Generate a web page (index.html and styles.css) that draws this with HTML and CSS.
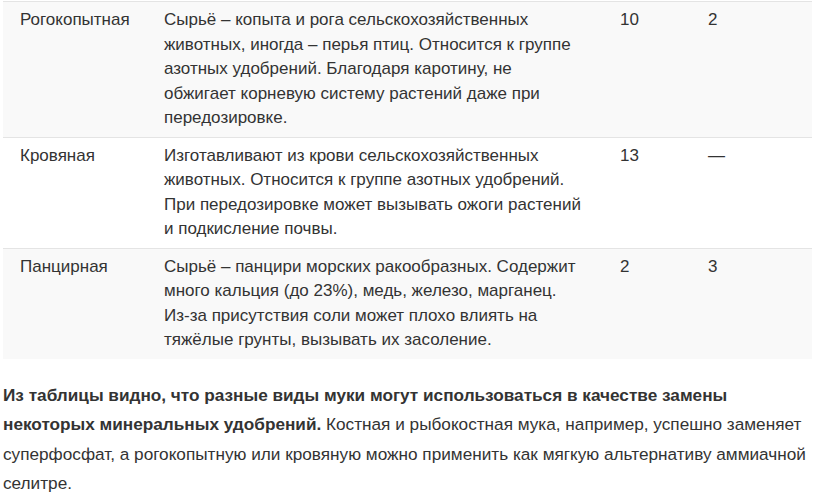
FILE: index.html
```html
<!DOCTYPE html>
<html lang="ru">
<head>
    <meta charset="UTF-8">
    <meta name="viewport" content="width=device-width, initial-scale=1.0">
    <title>Виды муки</title>
    <link rel="stylesheet" href="styles.css">
</head>
<body>
    <div class="article">
        <table class="flour-table">
            <tr class="striped">
                <td class="col-name">Рогокопытная</td>
                <td class="col-desc">Сырьё – копыта и рога сельскохозяйственных животных, иногда – перья птиц. Относится к группе азотных удобрений. Благодаря каротину, не обжигает корневую систему растений даже при передозировке.</td>
                <td class="col-num">10</td>
                <td class="col-num2">2</td>
            </tr>
            <tr>
                <td class="col-name">Кровяная</td>
                <td class="col-desc">Изготавливают из крови сельскохозяйственных животных. Относится к группе азотных удобрений. При передозировке может вызывать ожоги растений и подкисление почвы.</td>
                <td class="col-num">13</td>
                <td class="col-num2">—</td>
            </tr>
            <tr class="striped">
                <td class="col-name">Панцирная</td>
                <td class="col-desc">Сырьё – панцири морских ракообразных. Содержит много кальция (до 23%), медь, железо, марганец. <span class="nowrap">Из-за</span> присутствия соли может плохо влиять на тяжёлые грунты, вызывать их засоление.</td>
                <td class="col-num">2</td>
                <td class="col-num2">3</td>
            </tr>
        </table>

        <p class="summary"><strong>Из таблицы видно, что разные виды муки могут использоваться в качестве замены некоторых минеральных удобрений.</strong> Костная и рыбокостная мука, например, успешно заменяет суперфосфат, а рогокопытную или кровяную можно применить как мягкую альтернативу аммиачной селитре.</p>
    </div>
</body>
</html>
```

FILE: styles.css
```css
body {
    margin: 0;
    background-color: #fff;
    color: #333;
    font-family: "Liberation Sans", Arial, sans-serif;
    font-size: 17px;
}

.article {
    padding: 1px 3px 0 3px;
}

/* Таблица */
.flour-table {
    width: 809px;
    border-collapse: collapse;
    border-top: 1px solid #e4e4e4;
}

.flour-table td {
    padding: 6px 11px 6px 17px;
    line-height: 24.5px;
    vertical-align: top;
    border-bottom: 1px solid #e4e4e4;
}

.flour-table tr:last-child td {
    border-bottom: none;
}

.flour-table .striped {
    background-color: #f9f9f9;
}

.col-name {
    width: 116px;
}

.flour-table .col-desc {
    width: 420px;
    padding-right: 19px;
}

.col-num {
    width: 60px;
}

.nowrap {
    white-space: nowrap;
}

/* Текст после таблицы */
.summary {
    margin: 22px 0 0;
    font-size: 17.2px;
    line-height: 29.5px;
}
```
